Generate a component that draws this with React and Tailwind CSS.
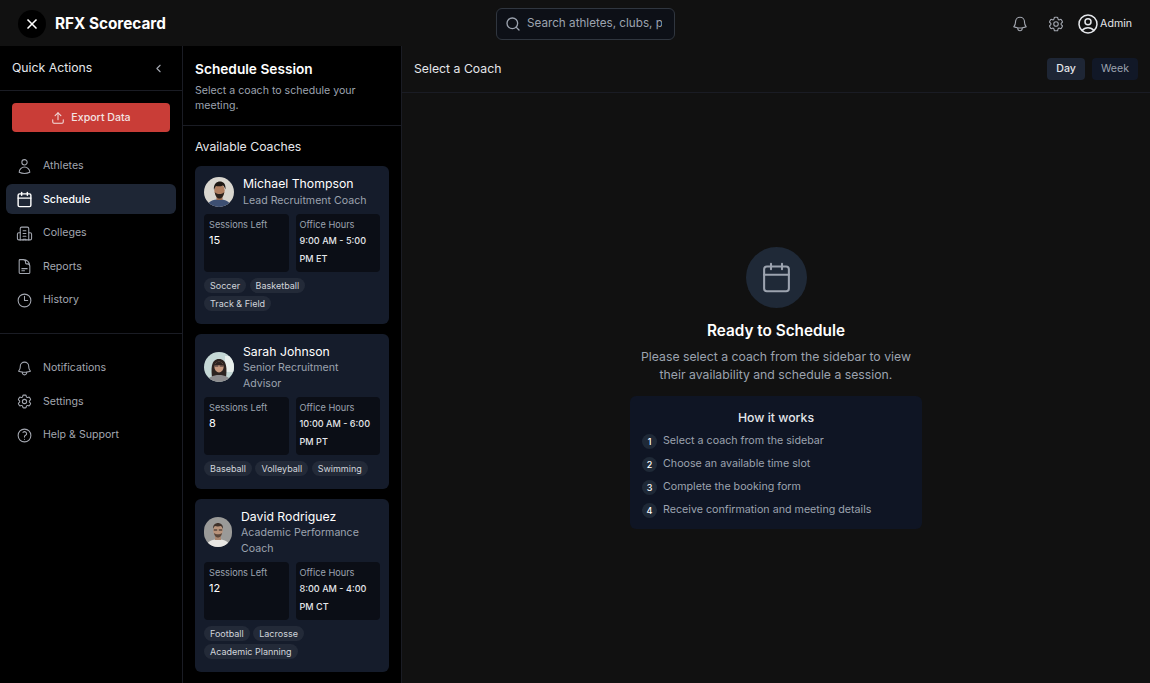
import React from 'react';
import { X, Search, ChevronLeft, Upload, Calendar } from 'lucide-react';
import {
  HiOutlineUser,
  HiOutlineDocumentText,
  HiOutlineClock,
  HiOutlineBell,
  HiOutlineCog6Tooth,
  HiOutlineQuestionMarkCircle,
  HiOutlineUserCircle,
} from 'react-icons/hi2';

const CollegeIcon = ({ className }) => (
  <svg viewBox="0 0 24 24" fill="none" stroke="currentColor" strokeWidth="1.5" strokeLinecap="round" strokeLinejoin="round" className={className}>
    <path d="M6 21V5a2 2 0 0 1 2-2h8a2 2 0 0 1 2 2v16" />
    <path d="M6 11H4a2 2 0 0 0-2 2v6a2 2 0 0 0 2 2h16a2 2 0 0 0 2-2v-6a2 2 0 0 0-2-2h-2" />
    <path d="M10 8h4M10 12h4M10 16h4M10 21v-1h4v1" />
  </svg>
);

const mainNav = [
  { label: 'Athletes', icon: HiOutlineUser },
  { label: 'Schedule', icon: Calendar, active: true },
  { label: 'Colleges', icon: CollegeIcon },
  { label: 'Reports', icon: HiOutlineDocumentText },
  { label: 'History', icon: HiOutlineClock },
];

const bottomNav = [
  { label: 'Notifications', icon: HiOutlineBell },
  { label: 'Settings', icon: HiOutlineCog6Tooth },
  { label: 'Help & Support', icon: HiOutlineQuestionMarkCircle },
];

const steps = [
  'Select a coach from the sidebar',
  'Choose an available time slot',
  'Complete the booking form',
  'Receive confirmation and meeting details',
];

const MichaelAvatar = () => (
  <svg viewBox="0 0 30 30" className="w-[30px] h-[30px] rounded-full shrink-0">
    <rect width="30" height="30" fill="#d9d6cf" />
    <path d="M3 30c1-6 6-7.500 12-7.500s11 1.500 12 7.500z" fill="#3d4f72" />
    <rect x="12.500" y="17" width="6" height="6" fill="#9c6d52" />
    <ellipse cx="15.500" cy="13.500" rx="5.200" ry="6.300" fill="#b07f61" />
    <path d="M10 13c-1-6 3-8.500 6-8.500s6 2 5.500 8c-1-2-1.500-3.500-2.500-4-2 1-5.500 1-7 .5-.8 1-1.500 2.500-2 4z" fill="#1d1713" />
    <path d="M10.800 15c.5 5 3 6.500 4.700 6.500s4.200-1.500 4.700-6.500c-1 1.500-2.500 2-4.700 2s-3.700-.5-4.700-2z" fill="#2b211b" />
  </svg>
);

const SarahAvatar = () => (
  <svg viewBox="0 0 30 30" className="w-[30px] h-[30px] rounded-full shrink-0">
    <rect width="30" height="30" fill="#c5d8d6" />
    <rect x="21" y="4" width="9" height="16" fill="#e8efec" />
    <path d="M8 25c-1-8-1-18 7-18s8 10 7 18z" fill="#2c2320" />
    <path d="M3 30c1-5 6-7 12-7s11 2 12 7z" fill="#8d8c8e" />
    <ellipse cx="15" cy="15" rx="4.600" ry="5.400" fill="#c79a80" />
    <path d="M10.500 13.500c1-3 3-4 4.500-4s3.500 1 4.500 4c-3 0-6-.5-9 0z" fill="#2c2320" />
    <path d="M10.800 14h3.500M15.700 14h3.500" stroke="#33292a" strokeWidth="1" />
  </svg>
);

const DavidAvatar = () => (
  <svg viewBox="0 0 28 30" className="w-[28px] h-[30px] rounded-full shrink-0">
    <rect width="28" height="30" fill="#9a9a98" />
    <path d="M2 30c1-6 6-7.500 12-7.500s11 1.500 12 7.500z" fill="#e9e7e3" />
    <rect x="11" y="18" width="6" height="5" fill="#a9866f" />
    <ellipse cx="14" cy="13.500" rx="4.800" ry="6" fill="#b9947b" />
    <path d="M9 12c-.5-4 2.500-6 5-6s5.500 2 5 6c-.8-2-1.500-2.500-2-3-2 .5-4.500.5-6 0-.8.7-1.500 1.500-2 3z" fill="#3d3029" />
    <path d="M9.800 13h3.400M14.800 13h3.400" stroke="#2a2320" strokeWidth="1.200" />
    <path d="M10 16c.5 3.500 2.500 4.500 4 4.500s3.500-1 4-4.500c-1 1-2.500 1.300-4 1.300s-3-.3-4-1.300z" fill="#5a473b" />
  </svg>
);

const coaches = [
  {
    name: 'Michael Thompson',
    role: 'Lead Recruitment Coach',
    sessions: '15',
    hours: '9:00 AM - 5:00 PM ET',
    tags: ['Soccer', 'Basketball', 'Track & Field'],
    avatar: MichaelAvatar,
  },
  {
    name: 'Sarah Johnson',
    role: 'Senior Recruitment Advisor',
    sessions: '8',
    hours: '10:00 AM - 6:00 PM PT',
    tags: ['Baseball', 'Volleyball', 'Swimming'],
    avatar: SarahAvatar,
  },
  {
    name: 'David Rodriguez',
    role: 'Academic Performance Coach',
    sessions: '12',
    hours: '8:00 AM - 4:00 PM CT',
    tags: ['Football', 'Lacrosse', 'Academic Planning'],
    avatar: DavidAvatar,
  },
];

const NavItem = ({ item }) => {
  const Icon = item.icon;
  return (
    <div className={`flex items-center gap-[10px] h-[30px] px-[10px] pt-[2px] rounded-md text-[10.600px] ${item.active ? 'bg-[#1e2635] text-white font-medium' : 'text-[#a3a7b0]'}`}>
      <Icon className="w-[17px] h-[17px] shrink-0" strokeWidth={item.active ? 2 : 1.5} />
      <span>{item.label}</span>
    </div>
  );
};

const CoachCard = ({ coach }) => {
  const Avatar = coach.avatar;
  return (
    <div className="bg-[#151c2b] rounded-md pt-[9px] px-[9px] pb-[12.500px]">
      <div className="flex items-center gap-[9px]">
        <Avatar />
        <div className="min-w-0 max-w-[130px]">
          <div className="text-[12.250px] leading-[17.500px] text-white">{coach.name}</div>
          <div className="text-[10.600px] leading-[15.500px] text-[#9ca3af]">{coach.role}</div>
        </div>
      </div>
      <div className="grid grid-cols-2 gap-[7px] mt-[6px]">
        <div className="bg-[#0b0e16] rounded-sm px-[5px] pt-[4px] h-[58px]">
          <div className="text-[9.200px] leading-[13px] text-[#9ca3af]">Sessions Left</div>
          <div className="text-[11px] leading-[18px] text-white">{coach.sessions}</div>
        </div>
        <div className="bg-[#0b0e16] rounded-sm pl-[4px] pr-[5px] pt-[4px] h-[58px]">
          <div className="text-[9.200px] leading-[13px] text-[#9ca3af]">Office Hours</div>
          <div className="text-[9.100px] leading-[18px] mt-[1px] font-medium text-[#e5e7eb]">{coach.hours}</div>
        </div>
      </div>
      <div className="flex flex-wrap gap-x-[3.500px] gap-y-[3px] mt-[6px] pr-[8px]">
        {coach.tags.map((tag) => (
          <span key={tag} className="bg-[#232a38] rounded-full px-[6px] h-[15px] leading-[15px] text-[9px] text-[#d1d5db]">{tag}</span>
        ))}
      </div>
    </div>
  );
};

export default function App() {
  return (
    <div className="w-[1150px] h-[683px] overflow-hidden flex flex-col bg-black text-white font-['Inter',sans-serif]">
      <header className="h-[46px] shrink-0 bg-[#111111] flex items-center justify-between pt-[2px] pl-[18px] pr-[18px]">
        <div className="flex items-center gap-[9px] w-[478px]">
          <div className="w-[28px] h-[28px] rounded-full bg-black flex items-center justify-center">
            <X className="w-[16px] h-[16px]" strokeWidth={2.5} />
          </div>
          <span className="text-[15.300px] font-bold">RFX Scorecard</span>
        </div>
        <div className="w-[179px] h-[32px] flex items-center gap-[6px] pl-[8px] pr-[12px] bg-[#0d1017] border border-[#30363f] rounded-md">
          <Search className="w-[16px] h-[16px] shrink-0 text-[#9ca3af]" />
          <input
            readOnly
            placeholder="Search athletes, clubs, programs..."
            className="min-w-0 flex-1 bg-transparent text-[11.700px] outline-none placeholder:text-[#9ca3af]"
          />
        </div>
        <div className="flex-1 flex items-center justify-end">
          <HiOutlineBell className="w-[18px] h-[18px] text-[#a3a7b0]" />
          <HiOutlineCog6Tooth className="w-[18px] h-[18px] ml-[18px] text-[#a3a7b0]" />
          <HiOutlineUserCircle className="w-[24px] h-[24px] ml-[11px] text-[#e5e7eb]" />
          <span className="text-[10.600px] text-[#e5e7eb]">Admin</span>
        </div>
      </header>

      <div className="flex-1 flex min-h-0">
        <aside className="w-[183px] shrink-0 bg-black border-r border-[#1a1c24] flex flex-col">
          <div className="h-[45px] shrink-0 flex items-center justify-between pl-[12px] pr-[17px] border-b border-[#1a1c24]">
            <span className="text-[12.250px] text-[#e5e7eb]">Quick Actions</span>
            <ChevronLeft className="w-[13px] h-[13px] text-[#a3a7b0]" />
          </div>
          <div className="px-[12px] pt-[12px]">
            <div className="h-[29px] bg-[#c93d37] rounded flex items-center justify-center gap-[6px] text-[10.600px] font-medium text-[#f3e3e2]">
              <Upload className="w-[14px] h-[14px]" strokeWidth={1.75} />
              <span>Export Data</span>
            </div>
          </div>
          <nav className="px-[6px] pt-[18px] pb-[19px] flex flex-col gap-[3.500px] border-b border-[#1a1c24]">
            {mainNav.map((item) => <NavItem key={item.label} item={item} />)}
          </nav>
          <nav className="px-[6px] pt-[18px] flex flex-col gap-[3.500px]">
            {bottomNav.map((item) => <NavItem key={item.label} item={item} />)}
          </nav>
        </aside>

        <section className="w-[219px] shrink-0 bg-black border-r border-[#1a1c24] flex flex-col">
          <div className="h-[80px] shrink-0 px-[12px] pt-[14px] border-b border-[#1a1c24]">
            <h1 className="text-[13.700px] leading-[18px] font-semibold">Schedule Session</h1>
            <p className="mt-[5px] text-[10.600px] leading-[15px] text-[#9ca3af]">Select a coach to schedule your meeting.</p>
          </div>
          <div className="px-[12px] pt-[12px]">
            <h2 className="text-[12.250px] leading-[18px] text-[#e5e7eb]">Available Coaches</h2>
            <div className="mt-[10px] flex flex-col gap-[10px]">
              {coaches.map((coach) => <CoachCard key={coach.name} coach={coach} />)}
            </div>
          </div>
        </section>

        <main className="flex-1 bg-[#111111] flex flex-col min-w-0">
          <div className="h-[47px] shrink-0 flex items-center justify-between pl-[12px] pr-[12px] border-b border-[#1a1c24]">
            <span className="text-[12.250px] text-[#e5e7eb]">Select a Coach</span>
            <div className="flex gap-[7px] text-[10.600px]">
              <span className="h-[22px] leading-[22px] px-[9px] rounded bg-[#1e2635] font-medium text-[#e5e7eb]">Day</span>
              <span className="h-[22px] leading-[22px] px-[9px] rounded bg-[#111827] text-[#9ca3af]">Week</span>
            </div>
          </div>
          <div className="flex-1 flex flex-col items-center pt-[154px]">
            <div className="w-[61px] h-[61px] rounded-full bg-[#1f2937] flex items-center justify-center">
              <Calendar className="w-[33px] h-[33px] text-[#9ca3af]" strokeWidth={1.5} />
            </div>
            <h2 className="mt-[12px] text-[15.300px] leading-[22px] font-semibold">Ready to Schedule</h2>
            <p className="mt-[6px] w-[292px] text-center text-[12.250px] leading-[18px] text-[#9ca3af]">Please select a coach from the sidebar to view their availability and schedule a session.</p>
            <div className="mt-[12px] w-[292px] h-[133px] bg-[#0f1524] rounded-md pt-[13px] px-[12px]">
              <h3 className="text-center text-[12.250px] leading-[18px] font-medium text-[#e5e7eb]">How it works</h3>
              <ul className="mt-[6px] flex flex-col gap-[7px]">
                {steps.map((step, i) => (
                  <li key={step} className="flex items-start gap-[6px] h-[16px]">
                    <span className="mt-[1px] w-[15px] h-[15px] rounded-full shrink-0 bg-[#1f2937] flex items-center justify-center text-[9px] font-medium text-white">{i + 1}</span>
                    <span className="text-[10.700px] leading-[15px] text-[#9ca3af]">{step}</span>
                  </li>
                ))}
              </ul>
            </div>
          </div>
        </main>
      </div>
    </div>
  );
}
